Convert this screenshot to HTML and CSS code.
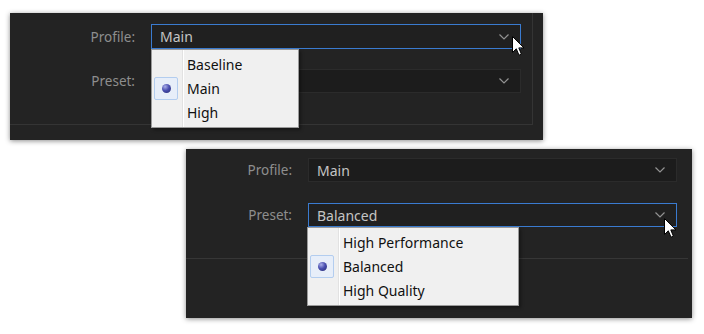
FILE: index.html
```html
<!DOCTYPE html>
<html lang="en">
<head>
  <meta charset="UTF-8" />
  <title>Profile / Preset dropdowns</title>
  <link rel="stylesheet" href="styles.css">
</head>
<body>
  <!-- Window 1: Profile open -->
  <div class="panel panel-one">
    <div class="frame">
      <div class="row">
        <label class="label">Profile:</label>
        <div class="combo focused"><span>Main</span><svg class="chev" width="10" height="6" viewBox="0 0 10 6"><path d="M0.5 0.5 L5 5 L9.5 0.5" /></svg></div>
      </div>
      <div class="row">
        <label class="label">Preset:</label>
        <div class="combo"><span></span><svg class="chev" width="10" height="6" viewBox="0 0 10 6"><path d="M0.5 0.5 L5 5 L9.5 0.5" /></svg></div>
      </div>
    </div>

    <ul class="menu menu-one">
      <li class="item">Baseline</li>
      <li class="item checked"><span class="mark"><i></i></span>Main</li>
      <li class="item">High</li>
    </ul>

    <svg class="cursor cursor-one" width="13" height="21" viewBox="0 0 13 21"><path d="M0.5 0.5 L0.5 16.5 L4.3 12.8 L7 19.2 L9.4 18.2 L6.8 11.9 L12 11.9 Z" /></svg>
  </div>

  <!-- Window 2: Preset open -->
  <div class="panel panel-two">
    <div class="rows">
      <div class="row">
        <label class="label">Profile:</label>
        <div class="combo"><span>Main</span><svg class="chev" width="10" height="6" viewBox="0 0 10 6"><path d="M0.5 0.5 L5 5 L9.5 0.5" /></svg></div>
      </div>
      <div class="row">
        <label class="label">Preset:</label>
        <div class="combo focused"><span>Balanced</span><svg class="chev" width="10" height="6" viewBox="0 0 10 6"><path d="M0.5 0.5 L5 5 L9.5 0.5" /></svg></div>
      </div>
    </div>
    <div class="divider"></div>

    <ul class="menu menu-two">
      <li class="item">High Performance</li>
      <li class="item checked"><span class="mark"><i></i></span>Balanced</li>
      <li class="item">High Quality</li>
    </ul>

    <svg class="cursor cursor-two" width="13" height="21" viewBox="0 0 13 21"><path d="M0.5 0.5 L0.5 16.5 L4.3 12.8 L7 19.2 L9.4 18.2 L6.8 11.9 L12 11.9 Z" /></svg>
  </div>
</body>
</html>
```

FILE: styles.css
```css
* {
  box-sizing: border-box;
}

body {
  margin: 0;
  width: 704px;
  height: 334px;
  background: #fff;
  font-family: "Noto Sans", "Open Sans", sans-serif;
  font-size: 14px;
  position: relative;
  overflow: hidden;
}

.panel {
  position: absolute;
  background: #232323;
  box-shadow: 0 1px 5px rgba(0,0,0,0.45);
}

.panel-one {
  left: 10px;
  top: 13px;
  width: 533px;
  height: 127px;
}

.panel-two {
  left: 186px;
  top: 149px;
  width: 506px;
  height: 169px;
}

/* inner group box of the first window */
.frame {
  width: 523px;
  height: 112px;
  border-right: 1px solid #343434;
  border-bottom: 1px solid #343434;
  padding-top: 11px;
  display: flex;
  flex-direction: column;
  gap: 20px;
}

.rows {
  padding-top: 9px;
  display: flex;
  flex-direction: column;
  gap: 21px;
}

.row {
  display: flex;
  align-items: center;
}

.label {
  color: #8e8e8e;
  text-align: right;
  padding-right: 16px;
  font-size: 13.5px;
}

.panel-one .label {
  width: 141px;
}

.panel-two .label {
  width: 122px;
}

.combo {
  height: 25px;
  background: #1c1c1c;
  border: 1px solid #2b2b2b;
  color: #c4c4c4;
  display: flex;
  align-items: center;
  justify-content: space-between;
  padding: 0 11px 0 8px;
}

.panel-one .combo {
  width: 370px;
}

.panel-one .row + .row .combo {
  height: 24px;
}

.panel-two .combo {
  width: 369px;
  height: 24px;
}

.combo.focused {
  background: #202020;
  border-color: #3a7bd0;
}

.chev path {
  fill: none;
  stroke: #929292;
  stroke-width: 1.2;
}

.divider {
  margin-top: 31px;
  width: 502px;
  border-top: 1px solid #363636;
}

/* popup list */
.menu {
  position: absolute;
  margin: 0;
  padding: 3px 2px 2px 2px;
  list-style: none;
  background: #f0f0f0;
  border: 1px solid #9a9a9a;
  box-shadow: 2px 2px 3px rgba(0,0,0,0.35);
  color: #111;
  background-image: linear-gradient(#e2e2e2, #e2e2e2), linear-gradient(#fff, #fff);
  background-size: 1px 100%, 1px 100%;
  background-position: 30px 0, 31px 0;
  background-repeat: no-repeat;
}

.menu-one {
  left: 141px;
  top: 36px;
  width: 148px;
}

.menu-two {
  left: 121px;
  top: 78px;
  width: 212px;
}

.item {
  height: 24px;
  line-height: 23px;
  padding-left: 33px;
  position: relative;
}

.mark {
  position: absolute;
  left: 0;
  top: 0;
  width: 24px;
  height: 23px;
  background: #e7eef9;
  border: 1px solid #b3cdef;
  border-radius: 2px;
  display: flex;
  align-items: center;
  justify-content: center;
}

.mark i {
  width: 9px;
  height: 9px;
  border-radius: 50%;
  background: radial-gradient(circle at 35% 30%, #a9aee8 0%, #4a4fb0 45%, #24286e 100%);
}

.cursor {
  position: absolute;
}

.cursor path {
  fill: #fff;
  stroke: #000;
  stroke-width: 1;
  stroke-linejoin: miter;
}

.cursor-one {
  left: 502px;
  top: 23px;
}

.cursor-two {
  left: 478px;
  top: 69px;
}
```
